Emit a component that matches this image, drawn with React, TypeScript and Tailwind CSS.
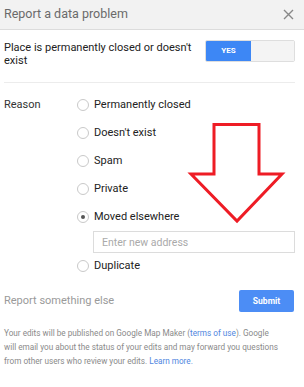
import React, { useState } from "react";

const reasons = ["Permanently closed", "Doesn't exist", "Spam", "Private", "Moved elsewhere", "Duplicate"];

function Radio({ checked }: { checked: boolean }) {
  return (
    <span className="flex h-[12px] w-[12px] items-center justify-center rounded-full border border-[#c9c9c9] bg-white">
      {checked && <span className="h-[4px] w-[4px] rounded-full bg-[#555]" />}
    </span>
  );
}

export default function App() {
  const [reason, setReason] = useState("Moved elsewhere");

  return (
    <div className="relative h-[387px] w-[304px] overflow-hidden bg-white font-['Roboto',sans-serif] text-[#222]">
      {/* header */}
      <div className="flex h-[30px] items-center justify-between border-b border-[#dcdcdc] bg-[#f2f2f2] pl-[4px] pr-[9px]">
        <span className="text-[12.5px] text-[#6a6a6a]">Report a data problem</span>
        <svg width="11" height="11" viewBox="0 0 11 11" className="mr-[1px]">
          <path d="M1 1L10 10M10 1L1 10" stroke="#888" strokeWidth="1.4" />
        </svg>
      </div>

      <div className="pl-[4px] pr-[9px]">
        {/* closed toggle */}
        <div className="flex items-start justify-between border-b border-[#ececec] pb-[15px] pt-[10px]">
          <p className="w-[192px] pt-[1px] text-[11px] leading-[13px]">Place is permanently closed or doesn't exist</p>
          <div className="flex h-[22px] w-[90px] overflow-hidden rounded-[2px] border border-[#dedede]">
            <span className="flex w-[45px] items-center justify-center bg-[#3d87f5] text-[8px] font-bold text-white">YES</span>
            <span className="flex-1 bg-[#f4f4f4]" />
          </div>
        </div>

        {/* reasons */}
        <div className="flex pt-[8px]">
          <div className="w-[73px] pt-[7px] text-[11px] leading-[14px] text-[#333]">Reason</div>
          <div className="flex-1">
            {reasons.map((r) => (
              <React.Fragment key={r}>
                <button
                  onClick={() => setReason(r)}
                  className={`flex items-center gap-[5px] text-[11px] text-[#222] ${r === "Duplicate" ? "h-[26px]" : "h-[28px]"}`}
                >
                  <Radio checked={reason === r} />
                  <span>{r}</span>
                </button>
                {r === "Moved elsewhere" && (
                  <input
                    placeholder="Enter new address"
                    className="ml-[16px] block h-[22px] w-[202px] border border-[#dcdcdc] px-[8px] text-[10.5px] text-[#222] outline-none placeholder:text-[#aaa]"
                  />
                )}
              </React.Fragment>
            ))}
          </div>
        </div>

        {/* report else + submit */}
        <div className="mt-[11px] flex items-center justify-between">
          <span className="text-[11px] text-[#9a9a9a]">Report something else</span>
          <button className="mr-[1px] h-[22px] w-[55px] rounded-[2px] bg-[#4c8df5] text-[8.5px] font-bold text-white">Submit</button>
        </div>

        <p className="mt-[14px] whitespace-nowrap text-[8.2px] leading-[14px] text-[#8a8a8a]">
          Your edits will be published on Google Map Maker (<span className="text-[#4f86e0]">terms of use</span>). Google
          <br />
          will email you about the status of your edits and may forward you questions
          <br />
          from other users who review your edits. <span className="text-[#4f86e0]">Learn more.</span>
        </p>
      </div>

      {/* red arrow annotation */}
      <svg className="pointer-events-none absolute left-0 top-0" width="304" height="387">
        <path
          d="M214 124.5 L259 124.5 L259 174 L282 174 L237 221 L191 174 L214 174 Z"
          fill="none"
          stroke="#ee1c25"
          strokeWidth="3"
          strokeLinejoin="miter"
        />
      </svg>
    </div>
  );
}
